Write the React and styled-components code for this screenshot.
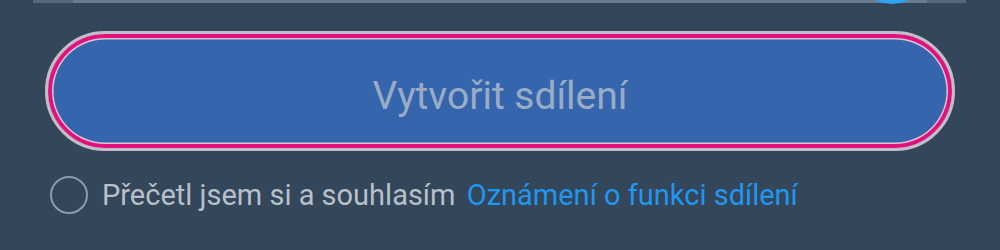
import React, { useState } from "react";
import styled, { createGlobalStyle } from "styled-components";

const GlobalStyle = createGlobalStyle`
  html, body {
    margin: 0;
    padding: 0;
    background: #344659;
  }
  body {
    font-family: Roboto, "Noto Sans", sans-serif;
  }
`;

const Page = styled.div`
  width: 1000px;
  height: 250px;
  background: #344659;
  overflow: hidden;
  box-sizing: border-box;
`;

const Track = styled.div`
  position: relative;
  height: 3px;
  margin: 0 34px 0 33px;
  background: linear-gradient(
    to right,
    #56687a 0,
    #56687a 40px,
    #6b7a8a 40px,
    #6b7a8a calc(100% - 39px),
    #56687a calc(100% - 39px)
  );
`;

const Thumb = styled.div`
  position: absolute;
  left: 819px;
  top: -76px;
  width: 80px;
  height: 80px;
  border-radius: 50%;
  background: #2ea3f2;
`;

const ShareButton = styled.button`
  display: flex;
  align-items: center;
  justify-content: center;
  box-sizing: border-box;
  width: 910px;
  height: 120px;
  margin: 28px 0 0 45px;
  padding: 10px 0 0;
  border: 3px solid #c3bfca;
  border-radius: 60px;
  background: #3566ad;
  box-shadow: inset 0 0 0 4px #e3117b, inset 0 0 0 5.5px #d9c6d6;
  color: #9aabc5;
  font-family: Roboto, "Noto Sans", sans-serif;
  font-size: 39px;
  cursor: default;
`;

const AgreeRow = styled.label`
  display: flex;
  align-items: center;
  gap: 14px;
  margin: 25px 0 0 50px;
  font-size: 29px;
  color: #b6c0cb;
  cursor: pointer;
`;

const Radio = styled.span`
  box-sizing: border-box;
  flex: none;
  width: 38px;
  height: 38px;
  border-radius: 50%;
  border: 2px solid ${(p) => (p.checked ? "#2196f3" : "#8d9bab")};
  background: ${(p) => (p.checked ? "#2196f3" : "transparent")};
`;

const Link = styled.a`
  margin-left: 4px;
  color: #2196ef;
  text-decoration: none;
`;

export default function App() {
  const [agreed, setAgreed] = useState(false);

  return (
    <Page>
      <GlobalStyle />
      <Track>
        <Thumb />
      </Track>
      <ShareButton disabled={!agreed}>Vytvořit sdílení</ShareButton>
      <AgreeRow onClick={() => setAgreed(!agreed)}>
        <Radio checked={agreed} />
        <span>
          Přečetl jsem si a souhlasím
          <Link href="#"> Oznámení o funkci sdílení</Link>
        </span>
      </AgreeRow>
    </Page>
  );
}
